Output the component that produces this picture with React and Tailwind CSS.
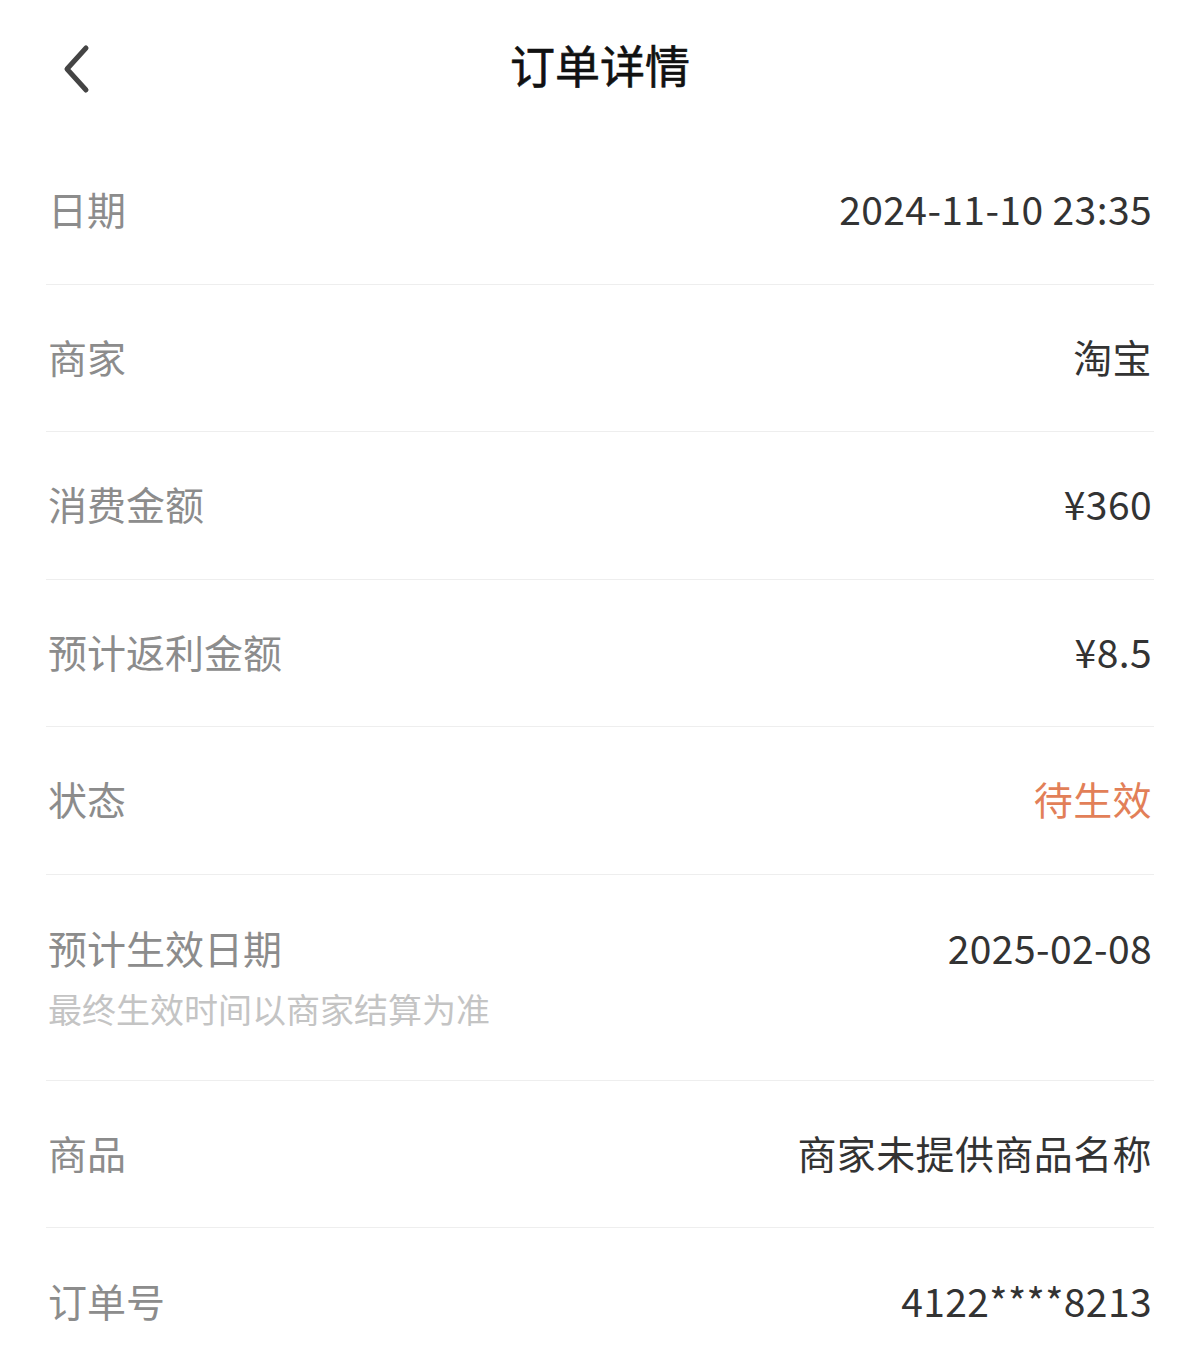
import React from "react";

const font = { fontFamily: '"Noto Sans CJK SC", "Noto Sans", sans-serif' };

function Row({ label, value, valueClass = "text-[#333333]", last }) {
  return (
    <div className={`flex h-[147.5px] items-center justify-between px-[2px] pb-[4px] ${last ? "" : "border-b border-[#eeeeee]"}`}>
      <span className="text-[39px] leading-[48px] text-[#8c8c8c]">{label}</span>
      <span className={`text-[39px] leading-[48px] tracking-[0.4px] ${valueClass}`}>{value}</span>
    </div>
  );
}

export default function App() {
  return (
    <div className="w-[1200px] h-[1360px] bg-white overflow-hidden" style={font}>
      <div className="relative flex h-[137px] items-center justify-center pb-[8px]">
        <svg className="absolute left-[58px] top-[44px]" width="38" height="50" viewBox="0 0 38 50" fill="none">
          <path d="M28 4 L9 25 L28 46" stroke="#444444" strokeWidth="5" strokeLinecap="round" strokeLinejoin="round" />
        </svg>
        <span className="text-[45px] leading-[56px] text-[#111111] [-webkit-text-stroke:0.6px_#111111]">订单详情</span>
      </div>
      <div className="px-[46px]">
        <Row label="日期" value="2024-11-10 23:35" />
        <Row label="商家" value="淘宝" />
        <Row label="消费金额" value="¥360" />
        <Row label="预计返利金额" value="¥8.5" />
        <Row label="状态" value="待生效" valueClass="text-[#e27f58]" />
        <div className="flex h-[206px] justify-between border-b border-[#eeeeee] px-[2px] pt-[48px]">
          <div className="flex flex-col gap-[16px]">
            <span className="text-[39px] leading-[48px] text-[#8c8c8c]">预计生效日期</span>
            <span className="text-[34px] leading-[44px] text-[#c4c4c4]">最终生效时间以商家结算为准</span>
          </div>
          <span className="text-[39px] leading-[48px] tracking-[0.4px] text-[#333333]">2025-02-08</span>
        </div>
        <Row label="商品" value="商家未提供商品名称" />
        <Row label="订单号" value="4122****8213" last />
      </div>
    </div>
  );
}
